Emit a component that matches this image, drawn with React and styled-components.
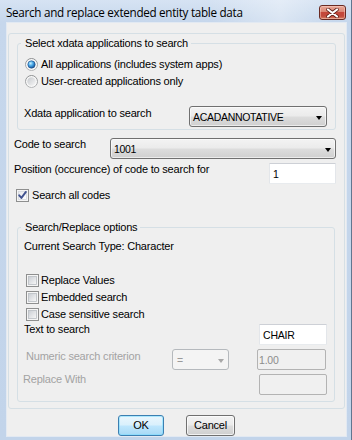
import React from "react";
import styled, { createGlobalStyle } from "styled-components";

const UI = `"Liberation Sans", Arial, sans-serif`;
const TITLE = `"Open Sans", "Noto Sans", sans-serif`;
const FIELD = `"Liberation Sans", Arial, sans-serif`;

const GlobalStyle = createGlobalStyle`
  html, body { margin: 0; padding: 0; background: #c5d6eb; }
  body { font-family: ${UI}; font-size: 11px; color: #000; }
  * { box-sizing: border-box; }
`;

const Window = styled.div`
  width: 352px;
  height: 440px;
  display: flex;
  flex-direction: column;
  background: linear-gradient(180deg, #d6e3f3 0px, #c6d7ec 22px, #c2d4ea 100%);
  border-right: 1px solid #61758f;
  overflow: hidden;
`;

const TitleBar = styled.div`
  height: 22px;
  flex: none;
  display: flex;
  align-items: flex-start;
  justify-content: space-between;
  padding: 0 5px 0 6px;
  background: linear-gradient(90deg, rgba(255,255,255,0) 60%, rgba(255,255,255,0.35) 80%, rgba(255,255,255,0) 95%);
`;

const Title = styled.div`
  font-family: ${TITLE};
  font-size: 11.7px;
  letter-spacing: -0.3px;
  line-height: 18px;
  padding-top: 3px;
  color: #000;
`;

const CloseButton = styled.div`
  margin-top: 5px;
  width: 27px;
  height: 15px;
  border: 1px solid #6a2a22;
  border-radius: 3px;
  background: linear-gradient(180deg, #e9a797 0%, #dc8a78 42%, #c5473a 50%, #c24a3c 78%, #d98364 100%);
  box-shadow: inset 0 0 0 1px rgba(255, 220, 210, 0.45);
  display: flex;
  align-items: center;
  justify-content: center;
`;

const Client = styled.div`
  flex: 1;
  margin: 0 4px 5px 6px;
  background: #efefef;
  border: 1px solid #e2e9f2;
  display: flex;
  flex-direction: column;
`;

const OuterBox = styled.div`
  margin: 10px 1px 0 1px;
  border: 1px solid #d5dfe5;
  border-radius: 3px;
  display: flex;
  flex-direction: column;
`;

const Group = styled.fieldset`
  min-width: 0;
  margin: ${(p) => p.$margin};
  padding: ${(p) => p.$padding};
  border: 1px solid #d5dfe5;
  border-radius: 3px;
  display: flex;
  flex-direction: column;
`;

const Legend = styled.legend`
  margin-left: -3px;
  padding: 0 3px 0 4px;
  line-height: 16px;
  font-size: 11px;
  letter-spacing: -0.2px;
`;

const Row = styled.div`
  display: flex;
  align-items: flex-start;
  justify-content: space-between;
  height: ${(p) => p.$h || 21}px;
  margin-top: ${(p) => p.$mt || 0}px;
  padding: ${(p) => p.$pad || "0"};
`;

const OptionRow = styled.div`
  display: flex;
  align-items: center;
  gap: ${(p) => p.$gap ?? 3}px;
  height: ${(p) => p.$h || 17}px;
  margin-top: ${(p) => p.$mt || 0}px;
  padding-left: ${(p) => p.$pl || 0}px;
  line-height: 15px;
  letter-spacing: -0.2px;
`;

const Label = styled.div`
  line-height: 15px;
  letter-spacing: -0.2px;
  margin-top: ${(p) => p.$dy || 0}px;
  margin-left: ${(p) => p.$dx || 0}px;
  color: ${(p) => (p.$disabled ? "#a3a3a3" : "#000")};
  white-space: nowrap;
`;

const Text = styled.div`
  line-height: 15px;
  letter-spacing: -0.2px;
  height: 15px;
`;

const ComboBox = styled.div`
  width: ${(p) => p.$w}px;
  height: 21px;
  flex: none;
  margin-left: ${(p) => (p.$auto ? "auto" : "0")};
  border: 1px solid ${(p) => (p.$disabled ? "#b5b9bd" : "#707070")};
  border-radius: 3px;
  background: ${(p) =>
    p.$disabled
      ? "#f4f4f4"
      : "linear-gradient(180deg, #f3f3f3 0%, #ebebeb 48%, #dddddd 52%, #cfcfcf 100%)"};
  box-shadow: ${(p) => (p.$disabled ? "none" : "inset 0 0 0 1px rgba(255,255,255,0.6)")};
  display: flex;
  align-items: center;
  justify-content: space-between;
  padding: 1px 4px 0 ${(p) => p.$pl ?? 3}px;
  font-family: ${FIELD};
  font-size: 10.5px;
  letter-spacing: -0.3px;
  color: ${(p) => (p.$disabled ? "#9a9a9a" : "#000")};
`;

const Arrow = styled.span`
  width: 0;
  height: 0;
  border-left: 3.5px solid transparent;
  border-right: 3.5px solid transparent;
  border-top: 4px solid ${(p) => (p.$disabled ? "#a8a8a8" : "#000")};
  margin-top: 1px;
`;

const Field = styled.div`
  width: ${(p) => p.$w}px;
  height: 21px;
  flex: none;
  margin-left: ${(p) => p.$ml || 0}px;
  margin-right: ${(p) => p.$mr || 0}px;
  border: 1px solid;
  border-color: ${(p) =>
    p.$disabled ? "#b3b3b3" : "#cdd0d6 #e3e6ea #e8ebee #e3e6ea"};
  border-radius: ${(p) => (p.$disabled ? 2 : 1)}px;
  background: ${(p) => (p.$disabled ? "#f0f0f0" : "#ffffff")};
  padding: 1px 0 0 ${(p) => p.$pl ?? 3}px;
  display: flex;
  align-items: center;
  font-family: ${FIELD};
  font-size: 10.5px;
  letter-spacing: -0.2px;
  color: ${(p) => (p.$disabled ? "#8c8c8c" : "#000")};
`;

const ButtonRow = styled.div`
  display: flex;
  justify-content: center;
  gap: 22px;
  margin-top: 6px;
  height: 21px;
`;

const Button = styled.div`
  width: ${(p) => p.$w}px;
  height: 21px;
  border: 1px solid ${(p) => (p.$default ? "#3c7fb1" : "#707070")};
  border-radius: 3px;
  background: ${(p) =>
    p.$default
      ? "linear-gradient(180deg, #eaf6fd 0%, #d9f0fc 48%, #bee6fd 52%, #a7d9f5 100%)"
      : "linear-gradient(180deg, #f3f3f3 0%, #ebebeb 48%, #dddddd 52%, #cfcfcf 100%)"};
  box-shadow: inset 0 0 0 1px ${(p) => (p.$default ? "rgba(120,220,255,0.55)" : "rgba(255,255,255,0.7)")};
  display: flex;
  align-items: center;
  justify-content: center;
  font-size: 11px;
  letter-spacing: -0.2px;
  line-height: 15px;
`;

const IconSvg = styled.svg`
  display: block;
  flex: none;
`;

function Radio({ checked }) {
  return (
    <IconSvg width="13" height="13" viewBox="0 0 13 13">
      <defs>
        <linearGradient id="rbg" x1="0" y1="0" x2="1" y2="1">
          <stop offset="0" stopColor="#c6c9cd" />
          <stop offset="1" stopColor="#f7f7f7" />
        </linearGradient>
        <linearGradient id="rring" x1="0" y1="0" x2="0" y2="1">
          <stop offset="0" stopColor="#8c8e90" />
          <stop offset="1" stopColor="#b3b5b7" />
        </linearGradient>
        <radialGradient id="rdot" cx="0.38" cy="0.34" r="0.75">
          <stop offset="0" stopColor="#c9f1ff" />
          <stop offset="0.45" stopColor="#45a5e6" />
          <stop offset="1" stopColor="#0d3c7e" />
        </radialGradient>
      </defs>
      <circle cx="6.5" cy="6.5" r="6" fill="#f8f8f8" stroke="url(#rring)" />
      {checked ? (
        <circle cx="6.5" cy="6.5" r="3.7" fill="url(#rdot)" stroke="#1c4b86" strokeWidth="0.6" />
      ) : (
        <circle cx="6.5" cy="6.5" r="4.2" fill="url(#rbg)" />
      )}
    </IconSvg>
  );
}

function Check({ checked }) {
  return (
    <IconSvg width="13" height="13" viewBox="0 0 13 13">
      <defs>
        <linearGradient id="cbg" x1="0" y1="0" x2="1" y2="1">
          <stop offset="0" stopColor="#c9cdd3" />
          <stop offset="1" stopColor="#f8f8f8" />
        </linearGradient>
        <linearGradient id="cbgc" x1="0" y1="0" x2="1" y2="1">
          <stop offset="0" stopColor="#e6e8ec" />
          <stop offset="1" stopColor="#ffffff" />
        </linearGradient>
      </defs>
      <rect x="0.5" y="0.5" width="12" height="12" fill="#f5f5f5" stroke="#8e8f8f" />
      <rect x="2.5" y="2.5" width="8" height="8" fill={checked ? "url(#cbgc)" : "url(#cbg)"} stroke={checked ? "#d4d8de" : "#b9bdc3"} strokeWidth="0.8" />
      {checked && (
        <path d="M3.2 6.3 L5.4 8.9 L9.9 2.9" fill="none" stroke="#40528f" strokeWidth="1.9" strokeLinecap="round" strokeLinejoin="round" />
      )}
    </IconSvg>
  );
}

function CloseX() {
  return (
    <IconSvg width="13" height="10" viewBox="0 0 13 10">
      <path d="M2 1.5 L11 8.5 M11 1.5 L2 8.5" stroke="#5b1d15" strokeWidth="3.6" strokeLinecap="round" />
      <path d="M2 1.5 L11 8.5 M11 1.5 L2 8.5" stroke="#ffffff" strokeWidth="2.2" strokeLinecap="round" />
    </IconSvg>
  );
}

function Combo({ value, w, disabled, auto, pl }) {
  return (
    <ComboBox $w={w} $disabled={disabled} $auto={auto} $pl={pl}>
      <span>{value}</span>
      <Arrow $disabled={disabled} />
    </ComboBox>
  );
}

export default function App() {
  return (
    <>
      <GlobalStyle />
      <Window>
        <TitleBar>
          <Title>Search and replace extended entity table data</Title>
          <CloseButton>
            <CloseX />
          </CloseButton>
        </TitleBar>
        <Client>
          <OuterBox>
            <Group $margin="1px 8px 0 8px" $padding="5px 8px 2px 6px">
              <Legend>Select xdata applications to search</Legend>
              <OptionRow $pl={1}>
                <Radio checked />
                <span>All applications (includes system apps)</span>
              </OptionRow>
              <OptionRow $pl={1}>
                <Radio />
                <span>User-created applications only</span>
              </OptionRow>
              <Row $mt={16}>
                <Label>Xdata application to search</Label>
                <Combo value="ACADANNOTATIVE" w={138} />
              </Row>
            </Group>

            <Row $mt={8} $pad="0 8px 0 5px">
              <Label $dy={-1}>Code to search</Label>
              <Combo value="1001" w={226} />
            </Row>
            <Row $mt={4} $pad="0 8px 0 5px">
              <Label $dy={-1}>Position (occurence) of code to search for</Label>
              <Field $w={67}>1</Field>
            </Row>
            <OptionRow $mt={5} $h={13} $pl={7}>
              <Check checked />
              <span>Search all codes</span>
            </OptionRow>

            <Group $margin="17px 9px 6px 8px" $padding="4px 7px 6px 6px">
              <Legend>Search/Replace options</Legend>
              <Text>Current Search Type: Character</Text>
              <OptionRow $mt={18} $pl={2} $gap={2}>
                <Check />
                <span>Replace Values</span>
              </OptionRow>
              <OptionRow $pl={2} $gap={2}>
                <Check />
                <span>Embedded search</span>
              </OptionRow>
              <OptionRow $pl={2} $gap={2}>
                <Check />
                <span>Case sensitive search</span>
              </OptionRow>
              <Row $mt={1}>
                <Label $dy={-2}>Text to search</Label>
                <Field $w={68}>CHAIR</Field>
              </Row>
              <Row $mt={4}>
                <Label $dx={2} $disabled>Numeric search criterion</Label>
                <Combo value="=" w={57} disabled auto pl={4} />
                <Field $w={69} $ml={28} $mr={1} $pl={1} $disabled>1.00</Field>
              </Row>
              <Row $mt={4}>
                <Label $dy={-2} $dx={-1} $disabled>Replace With</Label>
                <Field $w={68} $disabled />
              </Row>
            </Group>
          </OuterBox>
          <ButtonRow>
            <Button $w={46} $default>OK</Button>
            <Button $w={49}>Cancel</Button>
          </ButtonRow>
        </Client>
      </Window>
    </>
  );
}
